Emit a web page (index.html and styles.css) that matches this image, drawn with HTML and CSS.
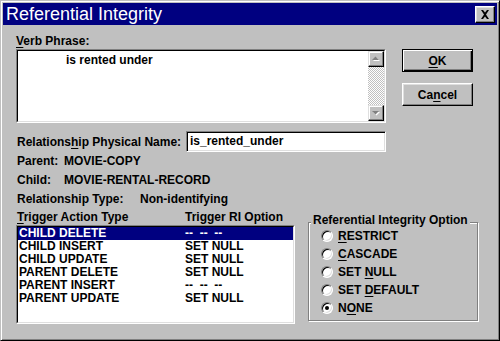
FILE: index.html
```html
<!doctype html>
<html lang="en">
  <head>
    <meta charset="UTF-8" />
    <title>Referential Integrity</title>
    <link rel="stylesheet" href="styles.css">
  </head>
  <body>
    <div class="window">
      <div class="titlebar">
        <span class="title">Referential Integrity</span>
        <div class="close">
          <svg width="10" height="9" viewBox="0 0 10 9">
            <path d="M1 0h2l2 2.5L7 0h2L6 4.5 9 9H7L5 6.5 3 9H1l3-4.5z" fill="#000" />
          </svg>
        </div>
      </div>

      <div class="dialog">
        <div class="top">
          <div class="verb">
            <div class="label"><u>V</u>erb Phrase:</div>
            <div class="memo">
              <div class="memo-in">
                <div class="memo-text">is rented under</div>
                <div class="vscroll">
                  <div class="sb-btn">
                    <svg width="14" height="14" viewBox="0 0 14 14">
                      <path d="M4 9h7L7.5 5.5z" fill="#fff" />
                      <path d="M3 8h7L6.5 4.5z" fill="#808080" />
                    </svg>
                  </div>
                  <div class="sb-track"></div>
                  <div class="sb-btn">
                    <svg width="14" height="14" viewBox="0 0 14 14">
                      <path d="M4 6h7L7.5 9.5z" fill="#fff" />
                      <path d="M3 5h7L6.5 8.5z" fill="#808080" />
                    </svg>
                  </div>
                </div>
              </div>
            </div>
          </div>
          <div class="buttons">
            <div class="btn default"><span><u>O</u>K</span></div>
            <div class="btn"><span>Ca<u>n</u>cel</span></div>
          </div>
        </div>

        <div class="name-row">
          <span class="name-label">Relations<u>h</u>ip Physical Name:</span>
          <div class="edit">is_rented_under</div>
        </div>

        <div class="info"><span class="key">Parent:</span>MOVIE-COPY</div>
        <div class="info"><span class="key">Child:</span>MOVIE-RENTAL-RECORD</div>
        <div class="info"><span class="key wide">Relationship Type:</span>Non-identifying</div>

        <div class="bottom">
          <div class="triggers">
            <div class="list-head">
              <span class="col1"><u>T</u>rigger Action Type</span><span>Trigger RI Option</span>
            </div>
            <div class="listbox">
              <div class="listbox-in">
                <div class="row selected"><span class="col1">CHILD DELETE</span><span>--&nbsp;&nbsp;--&nbsp;&nbsp;--</span></div>
                <div class="row"><span class="col1">CHILD INSERT</span><span>SET NULL</span></div>
                <div class="row"><span class="col1">CHILD UPDATE</span><span>SET NULL</span></div>
                <div class="row"><span class="col1">PARENT DELETE</span><span>SET NULL</span></div>
                <div class="row"><span class="col1">PARENT INSERT</span><span>--&nbsp;&nbsp;--&nbsp;&nbsp;--</span></div>
                <div class="row"><span class="col1">PARENT UPDATE</span><span>SET NULL</span></div>
              </div>
            </div>
          </div>

          <div class="group">
            <div class="group-title">Referential Integrity Option</div>
            <div class="radio"><span class="dot"></span><span><u>R</u>ESTRICT</span></div>
            <div class="radio"><span class="dot"></span><span><u>C</u>ASCADE</span></div>
            <div class="radio"><span class="dot"></span><span>SET <u>N</u>ULL</span></div>
            <div class="radio"><span class="dot"></span><span>SET <u>D</u>EFAULT</span></div>
            <div class="radio"><span class="dot checked"></span><span>N<u>O</u>NE</span></div>
          </div>
        </div>
      </div>
    </div>
  </body>
</html>
```

FILE: styles.css
```css
/* base */
* {
  box-sizing: border-box;
  margin: 0;
  padding: 0;
}

body {
  font-family: "Liberation Sans", Arial, sans-serif;
  font-size: 12px;
  font-weight: bold;
  color: #000;
  background: #c0c0c0;
}

u {
  text-decoration-thickness: 1px;
  text-underline-offset: 2px;
}

/* window frame */
.window {
  width: 500px;
  height: 341px;
  background: #c0c0c0;
  border: 1px solid;
  border-color: #c0c0c0 #000 #000 #c0c0c0;
  box-shadow: inset 1px 1px #fff, inset -1px -1px #808080;
  padding: 2px;
}

.titlebar {
  height: 22px;
  background: #000080;
  color: #fff;
  display: flex;
  align-items: center;
  justify-content: space-between;
  padding: 0 2px 0 3px;
}

.title {
  font-size: 18px;
  font-weight: normal;
  line-height: 22px;
}

.close {
  width: 20px;
  height: 17px;
  background: #c0c0c0;
  border: 1px solid;
  border-color: #fff #000 #000 #fff;
  box-shadow: inset -1px -1px #808080, inset 1px 1px #dfdfdf;
  display: flex;
  align-items: center;
  justify-content: center;
}

/* dialog body */
.dialog {
  padding: 9px 0 0 13px;
}

.label {
  line-height: 14px;
  margin-bottom: 1px;
}

.top {
  display: flex;
  gap: 16px;
}

.verb {
  width: 370px;
}

.memo,
.edit,
.listbox {
  background: #fff;
  border: 1px solid;
  border-color: #808080 #fff #fff #808080;
}

.memo {
  height: 74px;
}

.memo-in,
.listbox-in {
  height: 100%;
  border: 1px solid;
  border-color: #000 #dfdfdf #dfdfdf #000;
}

.memo-in {
  display: flex;
}

.memo-text {
  flex: 1;
  padding: 2px 0 0 48px;
  line-height: 14px;
}

.vscroll {
  width: 16px;
  display: flex;
  flex-direction: column;
}

.sb-btn {
  height: 16px;
  background: #c0c0c0;
  border: 1px solid;
  border-color: #dfdfdf #000 #000 #dfdfdf;
  box-shadow: inset -1px -1px #808080, inset 1px 1px #fff;
}

.sb-btn svg {
  display: block;
}

.sb-track {
  flex: 1;
  background: repeating-conic-gradient(#c0c0c0 0 25%, #fff 0 50%) 0 0 / 2px 2px;
}

/* buttons */
.buttons {
  padding-top: 15px;
  display: flex;
  flex-direction: column;
  gap: 11px;
}

.btn {
  width: 71px;
  height: 23px;
  background: #c0c0c0;
  border: 1px solid;
  border-color: #fff #000 #000 #fff;
  box-shadow: inset -1px -1px #808080, inset 1px 1px #dfdfdf;
  display: flex;
  align-items: center;
  justify-content: center;
  line-height: 14px;
}

.btn.default {
  border-color: #000;
  box-shadow: inset 1px 1px #fff, inset -1px -1px #000, inset -2px -2px #808080;
}

/* name row */
.name-row {
  display: flex;
  align-items: center;
  margin-top: 8px;
}

.name-label {
  width: 170px;
  padding-left: 1px;
}

.edit {
  width: 200px;
  height: 21px;
  box-shadow: inset 1px 1px #000, inset -1px -1px #dfdfdf;
  padding: 0 0 0 3px;
  line-height: 19px;
}

.info {
  line-height: 19px;
  padding-left: 1px;
}

.info:first-of-type {
  margin-top: 1px;
}

.key {
  display: inline-block;
  width: 47px;
}

.key.wide {
  width: 123px;
}

/* trigger list */
.bottom {
  display: flex;
  gap: 13px;
}

.triggers {
  width: 279px;
}

.list-head {
  line-height: 16px;
  padding-left: 1px;
}

.col1 {
  display: inline-block;
  width: 168px;
}

.listbox {
  height: 99px;
}

.row {
  line-height: 13px;
  padding-left: 1px;
  white-space: nowrap;
}

.row .col1 {
  width: 166px;
}

.row.selected {
  background: #000080;
  color: #fff;
}

/* option group */
.group {
  width: 170px;
  height: 99px;
  margin-top: 13px;
  border: 1px solid #808080;
  box-shadow: inset 1px 1px #fff, 1px 1px #fff;
}

.group-title {
  width: fit-content;
  margin: -10px 0 0 2px;
  padding: 0 2px;
  background: #c0c0c0;
  line-height: 14px;
}

.radio {
  height: 18px;
  display: flex;
  align-items: center;
  gap: 5px;
  padding-left: 12px;
}

.radio:first-of-type {
  margin-top: -1px;
}

.dot {
  width: 12px;
  height: 12px;
  border-radius: 50%;
  background: #fff;
  border: 1px solid;
  border-color: #808080 #fff #fff #808080;
  box-shadow: inset 1px 1px #000, inset -1px -1px #dfdfdf;
  display: flex;
  align-items: center;
  justify-content: center;
}

.dot.checked::after {
  content: "";
  width: 4px;
  height: 4px;
  border-radius: 50%;
  background: #000;
}
```
